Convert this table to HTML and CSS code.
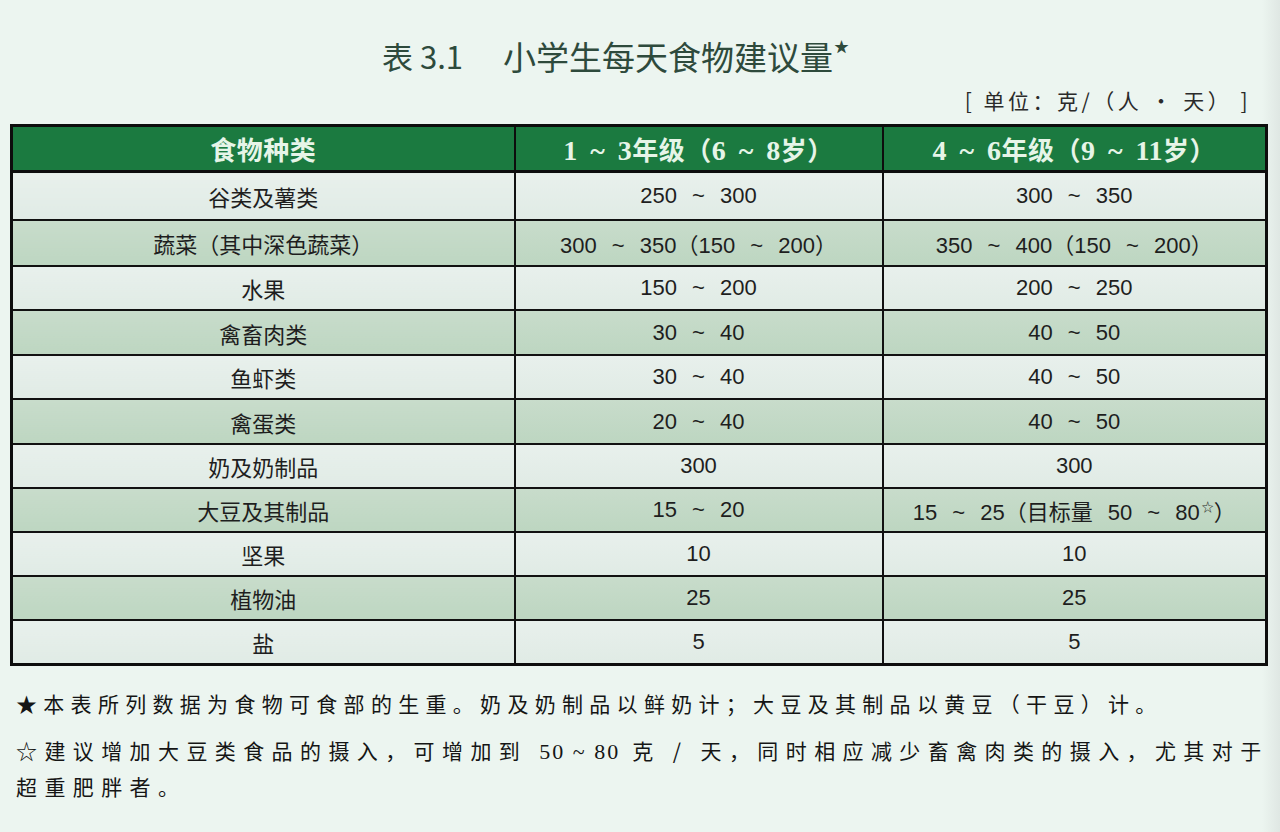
FILE: index.html
```html
<!DOCTYPE html>
<html lang="zh-CN">
<head>
<meta charset="utf-8">
<link rel="stylesheet" href="styles.css">
</head>
<body>
<div class="page">
  <h1 class="title"><span class="tno">表 3.1</span><span class="tname">小学生每天食物建议量</span><sup class="star">★</sup></h1>
  <div class="unit">[ 单位&#xFF1A;克/&#xFF08;人 · 天&#xFF09; ]</div>
  <table class="food">
    <colgroup><col class="c1"><col class="c2"><col class="c3"></colgroup>
    <thead>
      <tr><th>食物种类</th><th><span class="n">1 ~ 3</span>年级&#xFF08;<span class="n">6 ~ 8</span>岁&#xFF09;</th><th><span class="n">4 ~ 6</span>年级&#xFF08;<span class="n">9 ~ 11</span>岁&#xFF09;</th></tr>
    </thead>
    <tbody>
      <tr class="lt h46"><td>谷类及薯类</td><td>250 ~ 300</td><td>300 ~ 350</td></tr>
      <tr class="gr h44"><td>蔬菜&#xFF08;其中深色蔬菜&#xFF09;</td><td>300 ~ 350&#xFF08;150 ~ 200&#xFF09;</td><td>350 ~ 400&#xFF08;150 ~ 200&#xFF09;</td></tr>
      <tr class="lt"><td>水果</td><td>150 ~ 200</td><td>200 ~ 250</td></tr>
      <tr class="gr h43"><td>禽畜肉类</td><td>30 ~ 40</td><td>40 ~ 50</td></tr>
      <tr class="lt"><td>鱼虾类</td><td>30 ~ 40</td><td>40 ~ 50</td></tr>
      <tr class="gr h43"><td>禽蛋类</td><td>20 ~ 40</td><td>40 ~ 50</td></tr>
      <tr class="lt"><td>奶及奶制品</td><td>300</td><td>300</td></tr>
      <tr class="gr"><td>大豆及其制品</td><td>15 ~ 20</td><td>15 ~ 25&#xFF08;目标量 50 ~ 80<sup class="ws">☆</sup>&#xFF09;</td></tr>
      <tr class="lt"><td>坚果</td><td>10</td><td>10</td></tr>
      <tr class="gr"><td>植物油</td><td>25</td><td>25</td></tr>
      <tr class="lt"><td>盐</td><td>5</td><td>5</td></tr>
    </tbody>
  </table>
  <div class="notes">
    <p class="note n1">★本表所列数据为食物可食部的生重。奶及奶制品以鲜奶计&#xFF1B;大豆及其制品以黄豆&#xFF08;干豆&#xFF09;计。</p>
    <p class="note n2">☆建议增加大豆类食品的摄入&#xFF0C;可增加到 <span class="n">50 ~ 80</span> 克 / 天&#xFF0C;同时相应减少畜禽肉类的摄入&#xFF0C;尤其对于<br>超重肥胖者。</p>
  </div>
</div>
</body>
</html>
```

FILE: styles.css
```css
html, body {
  margin: 0;
  padding: 0;
}
body {
  width: 1280px;
  height: 832px;
  overflow: hidden;
  background: linear-gradient(to right, #ecf5f0 0, #ecf5f0 1262px, #dfe7e3 1280px);
  font-family: "Noto Sans CJK SC", sans-serif;
  color: #1f1f1f;
}
.page {
  padding: 0 15px 0 10px;
  display: flex;
  flex-direction: column;
}
.title {
  margin: 33px 0 0 0;
  padding-left: 372px;
  font-weight: 400;
  font-size: 33px;
  line-height: 46px;
  color: #2e4a3c;
  display: flex;
  align-items: flex-start;
}
.tno {
  font-size: 31px;
  margin-right: 40px;
}
.star {
  font-size: 15px;
  line-height: 15px;
  margin-left: 1px;
  margin-top: 5px;
  color: #2e4a3c;
}
.unit {
  align-self: flex-end;
  margin: 6px 14px 0 0;
  font-size: 21px;
  line-height: 30px;
  letter-spacing: 3.5px;
  color: #2a2a2a;
}
.food {
  margin-top: 9px;
  width: 1255px;
  border-collapse: collapse;
  border: 3px solid #0d0d0d;
  table-layout: fixed;
}
.c1 { width: 503px; }
.c2 { width: 368px; }
.c3 { width: 384px; }
.food th {
  background: #1b7a40;
  color: #e6f5e8;
  font-family: "Liberation Serif", "Noto Sans CJK SC", serif;
  font-weight: 700;
  font-size: 26px;
  height: 43px;
  padding: 0;
  border: 2px solid #0d0d0d;
  border-bottom: 3px solid #0d0d0d;
  letter-spacing: 0.5px;
}
.food th .n {
  font-family: "Liberation Serif", serif;
  font-size: 28px;
  word-spacing: 5px;
}
.food td {
  height: 42px;
  padding: 0;
  text-align: center;
  font-family: "Liberation Sans", "Noto Sans CJK SC", sans-serif;
  font-size: 22px;
  word-spacing: 9px;
  color: #1e1e1e;
  border: 2px solid #111;
}
.food tr.h46 td { height: 46px; }
.food tr.h44 td { height: 44px; }
.food tr.h43 td { height: 43px; }
.food tr.lt td { background: linear-gradient(#e8f0ec, #e0ebe5); }
.food tr.gr td { background: linear-gradient(#c8dccb, #bdd6c1); }
.ws {
  font-size: 12px;
  line-height: 0;
  vertical-align: 8px;
  margin-left: 2px;
}
.notes {
  margin-top: 20px;
  padding-left: 6px;
}
.note {
  margin: 0 0 13px 0;
  font-size: 21px;
  line-height: 34px;
  color: #151515;
  white-space: nowrap;
}
.n1 { letter-spacing: 6.3px; }
.n2 { letter-spacing: 7.4px; }
.note .n {
  font-family: "Liberation Serif", serif;
  font-size: 22px;
  letter-spacing: 2px;
}
```
